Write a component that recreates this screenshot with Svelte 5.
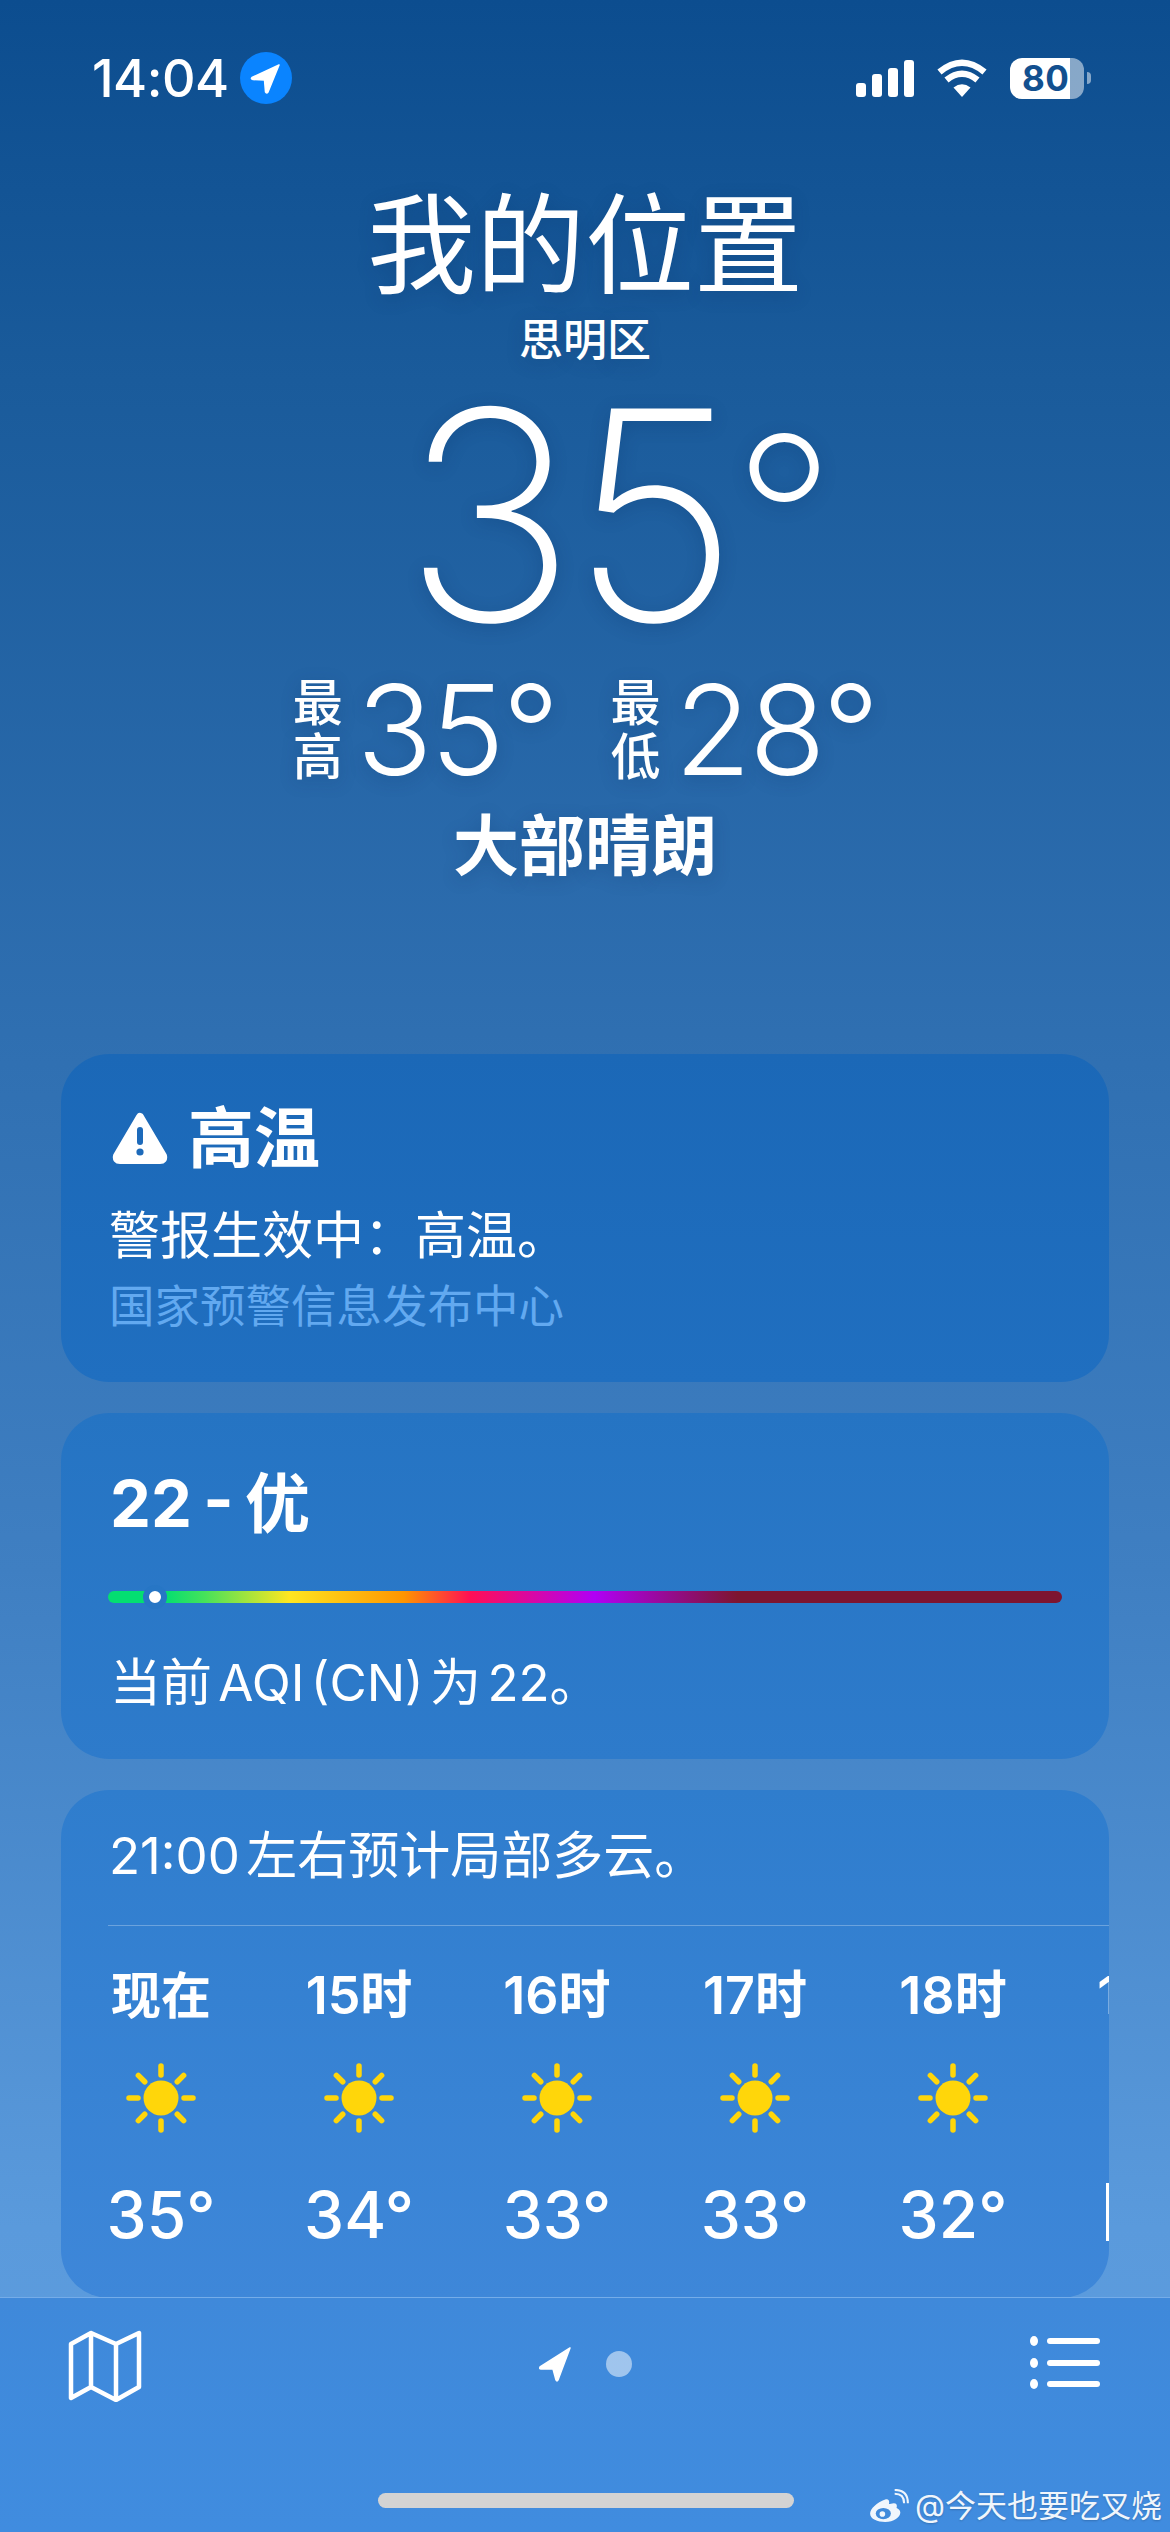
<script lang="ts">
  const hours = [
    { label: '现在', temp: '35°', now: true },
    { label: '15时', temp: '34°' },
    { label: '16时', temp: '33°' },
    { label: '17时', temp: '33°' },
    { label: '18时', temp: '32°' },
    { label: '19时', temp: '' },
  ];
  const rays = [0, 45, 90, 135, 180, 225, 270, 315];
  const alertText = '警报生效中\uFF1A高温。';
</script>

<div class="screen">
  <header class="status">
    <div class="clock">
      <span>14:04</span>
      <span class="loc-badge">
        <svg viewBox="0 0 52 52" width="52" height="52">
          <path d="M39 13 L12 25.500 Q10.500 27 13 27.500 L24.500 28 L25.500 40 Q26.500 42 28 40 Z" fill="#fff" stroke="#fff" stroke-width="1.500" stroke-linejoin="round" />
        </svg>
      </span>
    </div>
    <div class="indicators">
      <div class="signal">
        <i style="height: 14px"></i><i style="height: 23px"></i><i style="height: 29px"></i><i style="height: 37px"></i>
      </div>
      <svg class="wifi" viewBox="0 0 50 38" width="50" height="38">
        <path d="M25 38 L16.500 28.500 Q25 22 33.500 28.500 Z" fill="#fff" />
        <path d="M9.500 21 Q25 8.500 40.500 21" fill="none" stroke="#fff" stroke-width="6.500" />
        <path d="M2.500 13 Q25 -5.500 47.500 13" fill="none" stroke="#fff" stroke-width="6.500" />
      </svg>
      <div class="battery"><span>80</span></div>
      <span class="battery-tip"></span>
    </div>
  </header>

  <section class="hero">
    <h1>我的位置</h1>
    <div class="district">思明区</div>
    <div class="temp">35<span class="deg">°</span></div>
    <div class="range">
      <span class="range-label">最<br />高</span>
      <span class="range-val">35°</span>
      <span class="range-label second">最<br />低</span>
      <span class="range-val">28°</span>
    </div>
    <div class="cond">大部晴朗</div>
  </section>

  <main class="cards">
    <section class="card alert">
      <h2>
        <svg viewBox="0 0 56 52" width="56" height="52">
          <path d="M28 5 L51 44 Q52 48 48 48 L8 48 Q4 48 5 44 Z" fill="#fff" stroke="#fff" stroke-width="8" stroke-linejoin="round" />
          <rect x="25" y="15" width="6" height="18" rx="3" fill="#1d6aba" />
          <circle cx="28" cy="40" r="3.600" fill="#1d6aba" />
        </svg>
        高温
      </h2>
      <p>{alertText}</p>
      <p class="source">国家预警信息发布中心</p>
    </section>

    <section class="card aqi">
      <h2>22 - 优</h2>
      <div class="scale">
        <span class="knob"></span>
      </div>
      <p>当前 AQI (CN) 为 22。</p>
    </section>

    <section class="card hourly">
      <p class="summary">21:00 左右预计局部多云。</p>
      <div class="hour-row">
        {#each hours as h}
          <div class="hour">
            <span class="hour-label" class:now={h.now}>{h.label}</span>
            {#if h.temp}
              <svg class="sun" viewBox="0 0 70 70" width="70" height="70">
                <circle cx="35" cy="35" r="17.500" fill="#ffd60a" />
                {#each rays as r}
                  <line x1="35" y1="3" x2="35" y2="12" transform="rotate({r} 35 35)" stroke="#ffd60a" stroke-width="5.500" stroke-linecap="round" />
                {/each}
              </svg>
              <span class="hour-temp">{h.temp}</span>
            {:else}
              <span class="sun-gap"></span>
              <span class="edge-bar"></span>
            {/if}
          </div>
        {/each}
      </div>
    </section>
  </main>

  <nav class="tabbar">
    <svg class="map" viewBox="0 0 74 72" width="74" height="72">
      <path d="M3 14 L23 3 L23 57 L3 68 Z M23 3 L48 14 L48 70 L23 57 M48 14 L71 3 L71 57 L48 70" fill="none" stroke="#fff" stroke-width="4.500" stroke-linejoin="round" />
    </svg>
    <div class="pager">
      <svg viewBox="0 0 34 36" width="34" height="36">
        <path d="M32 2 L2 21 Q1 23 3 23 L15 23 L18 34 Q19 36 20 34 Z" fill="#fff" stroke="#fff" stroke-width="1.500" stroke-linejoin="round" />
      </svg>
      <span class="pager-dot"></span>
    </div>
    <div class="list-icon">
      {#each [0, 1, 2] as row}
        <div class="list-row"><i></i><b></b></div>
      {/each}
    </div>
  </nav>

  <div class="home-indicator"></div>

  <div class="watermark">
    <svg viewBox="0 0 42 36" width="40" height="34">
      <path d="M17 11 C8 14 1 21 1 26 C1 32 9 35 17 35 C26 35 33 30 33 25 C33 22 31 21 29 20 C30 17 29 15 26 15 C24 15 22 16 21 16 C22 12 20 10 17 11 Z" fill="#fff" />
      <ellipse cx="15" cy="26" rx="8" ry="6" fill="#3f8adb" />
      <circle cx="14" cy="26.500" r="3" fill="#fff" />
      <path d="M27 5 Q37 5 37 15 M27 1 Q41 1 41 15" fill="none" stroke="#fff" stroke-width="2.200" />
    </svg>
    <span>@今天也要吃叉烧</span>
  </div>
</div>

<style>
  :global(body) {
    margin: 0;
    background: #3f8adb;
  }

  .screen {
    position: relative;
    width: 1170px;
    height: 2532px;
    overflow: hidden;
    color: #fff;
    font-family: Inter, "Noto Sans CJK SC", sans-serif;
    background: linear-gradient(180deg, #0c4d8f 0%, #1a5b9b 15%, #3070b2 42%, #3f7fc2 62%, #5a9adc 88%, #5f9ee0 100%);
    display: flex;
    flex-direction: column;
  }

  .status {
    display: flex;
    justify-content: space-between;
    align-items: center;
    height: 52px;
    padding: 52px 79px 0 92px;
  }

  .clock {
    display: flex;
    align-items: center;
    gap: 11px;
    font-size: 52px;
    font-weight: 500;
    letter-spacing: -0.5px;
  }

  .loc-badge {
    display: block;
    width: 52px;
    height: 52px;
    border-radius: 50%;
    background: #0a84ff;
  }

  .loc-badge svg {
    display: block;
  }

  .indicators {
    display: flex;
    align-items: center;
  }

  .signal {
    display: flex;
    align-items: flex-end;
    gap: 6px;
    height: 37px;
    margin-right: 23px;
  }

  .signal i {
    display: block;
    width: 10px;
    border-radius: 3px;
    background: #fff;
  }

  .wifi {
    margin-right: 23px;
  }

  .battery {
    width: 74px;
    height: 41px;
    border-radius: 12px;
    background: linear-gradient(90deg, #fff 81%, rgba(255, 255, 255, 0.5) 81%);
    color: #12508f;
    font-size: 35px;
    font-weight: 700;
    line-height: 41px;
    padding-left: 12px;
    box-sizing: border-box;
    letter-spacing: 0.5px;
    overflow: hidden;
  }

  .battery-tip {
    width: 4px;
    height: 12px;
    margin-left: 3px;
    border-radius: 0 6px 6px 0;
    background: rgba(255, 255, 255, 0.5);
  }

  .hero {
    display: flex;
    flex-direction: column;
    align-items: center;
    text-shadow: 0 4px 18px rgba(0, 40, 90, 0.22);
  }

  h1 {
    margin: 79px 0 0 0;
    font-size: 109px;
    line-height: 124px;
    font-weight: 400;
    height: 124px;
  }

  .district {
    font-size: 44px;
    line-height: 56px;
    font-weight: 500;
    margin-top: 5px;
  }

  .temp {
    font-size: 292px;
    line-height: 300px;
    font-weight: 200;
    height: 290px;
    margin-top: -3px;
    margin-left: 68px;
    letter-spacing: -6px;
  }

  .deg {
    font-size: 225px;
    letter-spacing: 0;
    vertical-align: 22px;
    line-height: 0;
  }

  .range {
    display: flex;
    align-items: center;
    height: 120px;
    margin-top: 15px;
  }

  .range-label {
    font-size: 50px;
    line-height: 54px;
    font-weight: 500;
  }

  .range-label.second {
    margin-left: 53px;
  }

  .range-val {
    font-size: 125px;
    font-weight: 300;
    line-height: 120px;
    margin-left: 14px;
    letter-spacing: -2px;
  }

  .cond {
    font-size: 66px;
    line-height: 90px;
    font-weight: 700;
    margin-top: 11px;
  }

  .cards {
    display: flex;
    flex-direction: column;
    gap: 31px;
    margin: 163px 61px 0;
  }

  .card {
    border-radius: 48px;
    box-sizing: border-box;
  }

  .card p {
    margin: 0;
    font-size: 51px;
    line-height: 66px;
    word-spacing: -8px;
  }

  .card h2 {
    margin: 0;
    font-weight: 700;
  }

  .alert {
    height: 328px;
    padding: 44px 49px 0;
    background: linear-gradient(180deg, #1b68b7, #206fc0);
  }

  .alert h2 {
    display: flex;
    align-items: center;
    gap: 20px;
    font-size: 66px;
    line-height: 80px;
    margin: 0 0 25px 2px;
  }

  .alert p {
    margin-left: -1px;
  }

  .card.alert .source {
    font-size: 45.500px;
    line-height: 64px;
    color: #62a9f0;
    margin-top: 6px;
  }

  .aqi {
    height: 346px;
    padding: 48px 49px 0;
    background: linear-gradient(180deg, #2574c3, #2e7bcb);
  }

  .aqi h2 {
    font-size: 65px;
    line-height: 86px;
    word-spacing: -4px;
  }

  .scale {
    position: relative;
    height: 12px;
    margin: 44px -2px 47px -2px;
    border-radius: 6px;
    background: linear-gradient(90deg, #04de71 0%, #04de71 6%, #43e25b 10%, #ffe620 19%, #ff9500 31%, #ff0f55 38%, #b000f5 51%, #7d1530 66%, #7d1530 100%);
  }

  .knob {
    position: absolute;
    left: 35px;
    top: -3px;
    width: 12px;
    height: 12px;
    border-radius: 50%;
    background: #fff;
    border: 6px solid #2776c5;
    margin-top: -3px;
  }

  .hourly {
    height: 508px;
    padding-top: 33px;
    overflow: hidden;
    background: linear-gradient(180deg, #2f7dcd, #3e87d9);
  }

  .card .summary {
    margin: 0 0 0 48px;
    height: 102px;
  }

  .hour-row {
    display: flex;
    margin-left: 47px;
    border-top: 1.500px solid rgba(255, 255, 255, 0.28);
    padding-top: 40px;
  }

  .hour {
    flex: 0 0 198px;
    display: flex;
    flex-direction: column;
    align-items: center;
    transform: translateX(-46px);
  }

  .hour-label {
    font-size: 52px;
    line-height: 60px;
    font-weight: 600;
    white-space: nowrap;
  }

  .hour-label.now {
    font-size: 50px;
    font-weight: 700;
  }

  .sun {
    display: block;
    margin-top: 37px;
  }

  .sun-gap {
    height: 107px;
  }

  .edge-bar {
    align-self: flex-start;
    width: 3px;
    height: 58px;
    margin: 50px 0 0 54px;
    background: #fff;
  }

  .hour-temp {
    font-size: 64px;
    line-height: 80px;
    font-weight: 500;
    margin-top: 42px;
  }

  .tabbar {
    position: absolute;
    left: 0;
    right: 0;
    top: 2297px;
    bottom: 0;
    border-top: 1.500px solid rgba(255, 255, 255, 0.28);
    background: linear-gradient(180deg, #3f89da, #408cdf);
    display: flex;
    justify-content: space-between;
    align-items: flex-start;
    padding: 32px 70px 0 68px;
  }

  .pager {
    position: absolute;
    left: 538px;
    top: 48px;
    display: flex;
    align-items: center;
    gap: 34px;
  }

  .pager-dot {
    width: 26px;
    height: 26px;
    border-radius: 50%;
    background: rgba(255, 255, 255, 0.5);
  }

  .list-icon {
    display: flex;
    flex-direction: column;
    gap: 11.500px;
    margin-top: 6px;
  }

  .list-row {
    display: flex;
    align-items: center;
    gap: 9px;
  }

  .list-row i {
    width: 8px;
    height: 10px;
    border-radius: 50%;
    background: #fff;
  }

  .list-row b {
    display: block;
    width: 53px;
    height: 6px;
    border-radius: 3px;
    background: #fff;
  }

  .home-indicator {
    position: absolute;
    left: 378px;
    top: 2493px;
    width: 416px;
    height: 15px;
    border-radius: 8px;
    background: #d3d3d3;
  }

  .watermark {
    position: absolute;
    left: 869px;
    top: 2484px;
    display: flex;
    align-items: center;
    gap: 6px;
    font-size: 31px;
    line-height: 44px;
    opacity: 0.92;
    white-space: nowrap;
    text-shadow: 0 1px 2px rgba(0, 0, 0, 0.2);
  }
</style>
